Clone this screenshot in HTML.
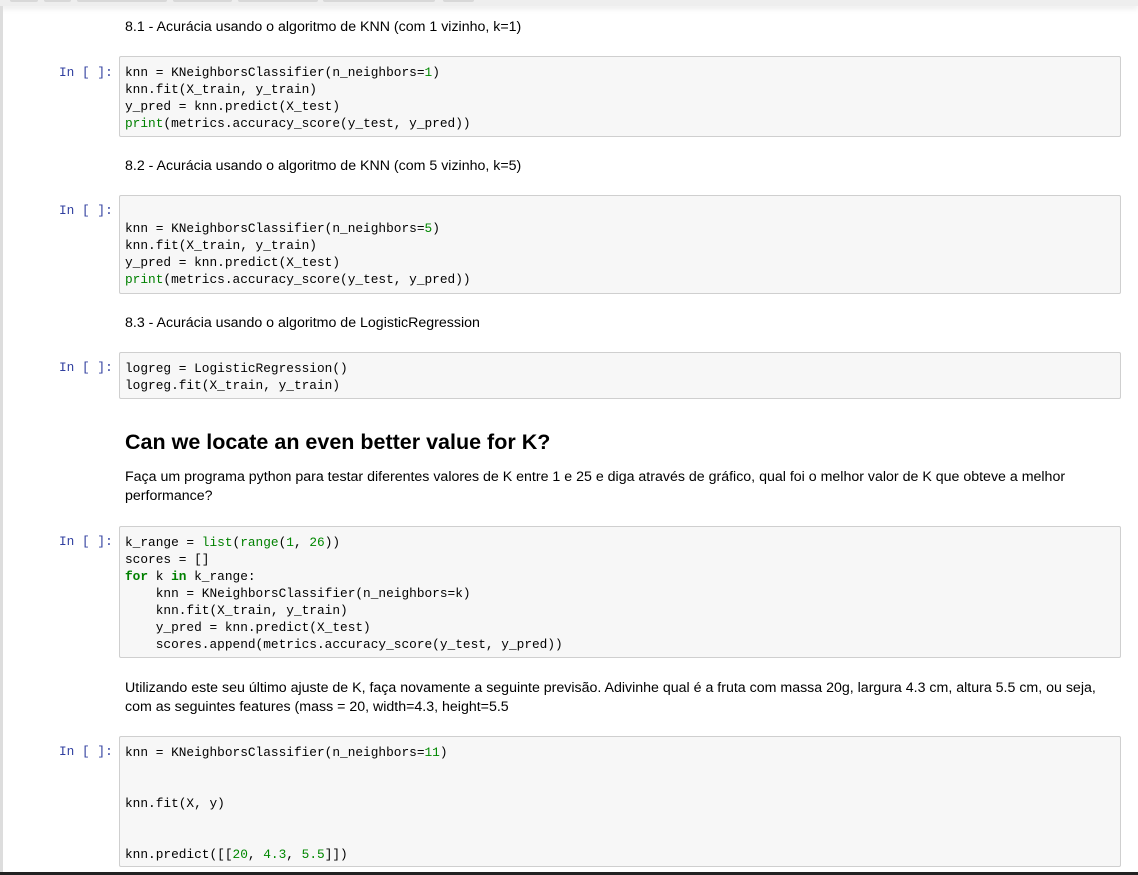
<!DOCTYPE html>
<html><head><meta charset="utf-8"><style>
body{margin:0;width:1138px;height:875px;background:#fff;position:relative;overflow:hidden;font-family:"Liberation Sans",Arial,sans-serif;}
.topbar{position:absolute;left:0;top:0;width:1138px;height:6px;background:#eee;box-shadow:0 3px 6px rgba(0,0,0,0.08);}
.btn{position:absolute;top:0;height:2px;background:#d8d8d8;border-radius:0 0 2px 2px;}
.lstrip{position:absolute;left:0;top:6px;width:3px;height:869px;background:#ddd;}
.bottom{position:absolute;left:0;top:872px;width:1138px;height:3px;background:#222;}
.t{position:absolute;left:125px;font-size:14.2px;color:#000;line-height:19px;white-space:nowrap;}
.p{position:absolute;left:59px;width:54px;text-align:left;font-family:"Liberation Mono",monospace;font-size:12.8px;color:#303f9f;line-height:17px;}
.c{position:absolute;left:119px;width:1002px;background:#f7f7f7;border:1px solid #cfcfcf;border-radius:2px;box-sizing:border-box;padding:7px 5px;font-family:"Liberation Mono",monospace;font-size:12.8px;line-height:17px;color:#000;white-space:pre;}
.n{color:#008800}.b{color:#008000}.k{color:#008000;font-weight:bold}
h2{position:absolute;left:125px;top:430px;margin:0;font-size:21.5px;font-weight:bold;}
</style></head><body>
<div class="topbar"></div>
<div class="btn" style="left:10px;width:28px"></div><div class="btn" style="left:44px;width:27px"></div><div class="btn" style="left:77px;width:90px"></div><div class="btn" style="left:173px;width:59px"></div><div class="btn" style="left:238px;width:80px"></div><div class="btn" style="left:323px;width:112px"></div><div class="btn" style="left:443px;width:31px"></div>
<div class="lstrip"></div>

<div class="t" style="top:18px">8.1 - Acurácia usando o algoritmo de KNN (com 1 vizinho, k=1)</div>
<div class="p" style="top:64px">In [ ]:</div>
<div class="c" style="top:56px;height:81px">knn = KNeighborsClassifier(n_neighbors=<span class="n">1</span>)
knn.fit(X_train, y_train)
y_pred = knn.predict(X_test)
<span class="b">print</span>(metrics.accuracy_score(y_test, y_pred))</div>

<div class="t" style="top:157px">8.2 - Acurácia usando o algoritmo de KNN (com 5 vizinho, k=5)</div>
<div class="p" style="top:202px">In [ ]:</div>
<div class="c" style="top:195px;height:99px">
knn = KNeighborsClassifier(n_neighbors=<span class="n">5</span>)
knn.fit(X_train, y_train)
y_pred = knn.predict(X_test)
<span class="b">print</span>(metrics.accuracy_score(y_test, y_pred))</div>

<div class="t" style="top:314px">8.3 - Acurácia usando o algoritmo de LogisticRegression</div>
<div class="p" style="top:359px">In [ ]:</div>
<div class="c" style="top:352px;height:47px">logreg = LogisticRegression()
logreg.fit(X_train, y_train)</div>

<h2>Can we locate an even better value for K?</h2>
<div class="t" style="top:468px">Faça um programa python para testar diferentes valores de K entre 1 e 25 e diga através de gráfico, qual foi o melhor valor de K que obteve a melhor<br>performance?</div>

<div class="p" style="top:533px">In [ ]:</div>
<div class="c" style="top:526px;height:132px">k_range = <span class="b">list</span>(<span class="b">range</span>(<span class="n">1</span>, <span class="n">26</span>))
scores = []
<span class="k">for</span> k <span class="k">in</span> k_range:
    knn = KNeighborsClassifier(n_neighbors=k)
    knn.fit(X_train, y_train)
    y_pred = knn.predict(X_test)
    scores.append(metrics.accuracy_score(y_test, y_pred))</div>

<div class="t" style="top:679px">Utilizando este seu último ajuste de K, faça novamente a seguinte previsão. Adivinhe qual é a fruta com massa 20g, largura 4.3 cm, altura 5.5 cm, ou seja,<br>com as seguintes features (mass = 20, width=4.3, height=5.5</div>

<div class="p" style="top:743px">In [ ]:</div>
<div class="c" style="top:736px;height:131px">knn = KNeighborsClassifier(n_neighbors=<span class="n">11</span>)


knn.fit(X, y)


knn.predict([[<span class="n">20</span>, <span class="n">4.3</span>, <span class="n">5.5</span>]])</div>
<div class="bottom"></div>
</body></html>
